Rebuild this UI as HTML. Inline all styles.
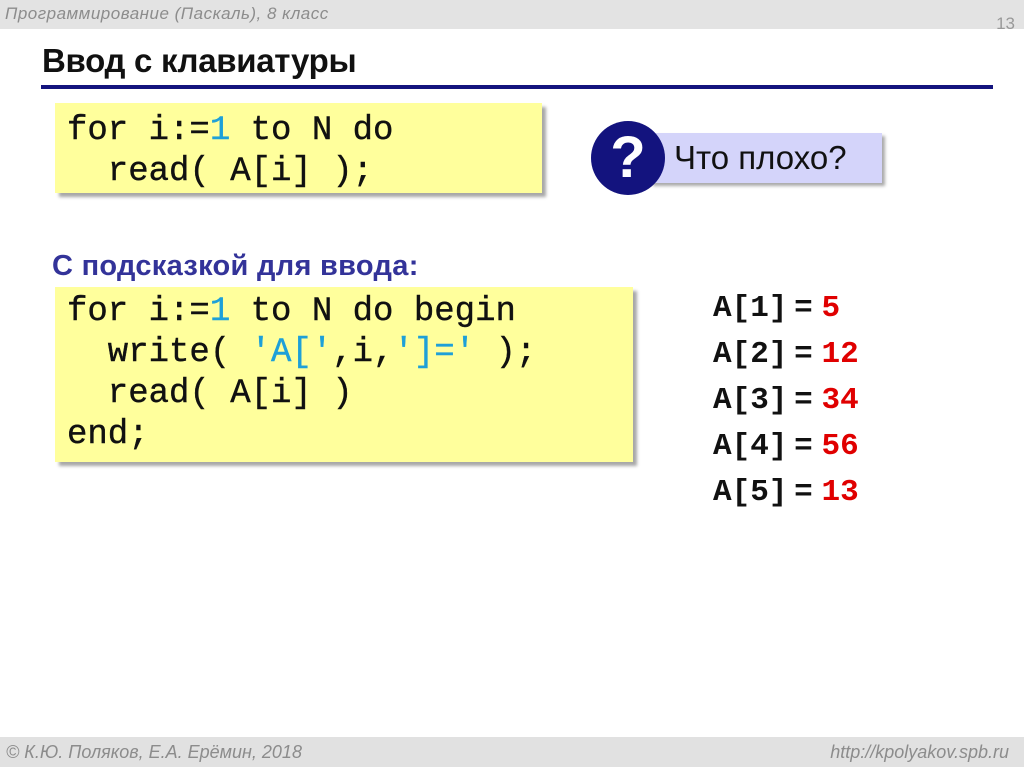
<!DOCTYPE html>
<html><head><meta charset="utf-8"><style>
body{margin:0;width:1024px;height:767px;background:#fff;position:relative;overflow:hidden;font-family:"Liberation Sans",sans-serif}
.hdr{position:absolute;left:0;top:0;width:1024px;height:29px;background:#e3e3e3}
.hdr span{position:absolute;left:5px;top:4px;font-size:17px;letter-spacing:0.5px;font-style:italic;color:#8c8c8c}
.num{position:absolute;right:9px;top:14px;font-size:17px;color:#999}
.ftr{position:absolute;left:0;top:737px;width:1024px;height:30px;background:#e1e1e1;font-style:italic;color:#8c8c8c;font-size:18px}
h1{position:absolute;left:42px;top:42px;margin:0;font-size:33px;font-weight:bold;color:#111;letter-spacing:-0.3px}
.line{position:absolute;left:41px;top:85px;width:952px;height:4px;background:#14147e}
.code{position:absolute;background:#ffff9c;box-shadow:4px 4px 3px #a8a8a8;font-family:"Liberation Mono",monospace;font-size:34px;line-height:41px;color:#111;padding:8px 0 0 12px;box-sizing:border-box;white-space:pre;-webkit-text-stroke:0.4px #111}
.b{color:#1ea0d8;-webkit-text-stroke:0.4px #1ea0d8}
.sub{position:absolute;left:52px;top:250px;font-size:29px;font-weight:bold;color:#333399;letter-spacing:0.3px}
.q{position:absolute;left:650px;top:133px;width:232px;height:50px;background:#d4d4fa;box-shadow:3px 3px 3px #aaa;font-size:33px;color:#111;line-height:50px;padding-left:24px;box-sizing:border-box}
.circ{position:absolute;left:591px;top:121px;width:74px;height:74px;border-radius:50%;background:#13137e;color:#fff;font-weight:bold;font-size:58px;text-align:center;line-height:74px}
.arr{position:absolute;left:713px;top:284px;font-family:"Liberation Mono",monospace;font-weight:bold;font-size:31px;line-height:43px;color:#111}
.arr i{font-style:normal;font-family:"Liberation Sans",sans-serif;font-weight:bold;margin:0 9px 0 7px}
.arr b{color:#e00000}
</style></head><body>
<div class="hdr"><span>Программирование (Паскаль), 8 класс</span></div>
<div class="num">13</div>
<h1>Ввод с клавиатуры</h1>
<div class="line"></div>
<div class="code" style="left:55px;top:103px;width:487px;height:90px">for i:=<span class="b">1</span> to N do
  read( A[i] );</div>
<div class="q">Что плохо?</div>
<div class="circ">?</div>
<div class="sub">С подсказкой для ввода:</div>
<div class="code" style="left:55px;top:287px;width:578px;height:175px;padding-top:5px">for i:=<span class="b">1</span> to N do begin
  write( <span class="b">'A['</span>,i,<span class="b">']='</span> );
  read( A[i] )
end;</div>
<div class="arr">A[1]<i>=</i><b>5</b><br>A[2]<i>=</i><b>12</b><br>A[3]<i>=</i><b>34</b><br>A[4]<i>=</i><b>56</b><br>A[5]<i>=</i><b>13</b></div>
<div class="ftr"><span style="position:absolute;left:6px;top:5px">© К.Ю. Поляков, Е.А. Ерёмин, 2018</span><span style="position:absolute;right:15px;top:5px">http://kpolyakov.spb.ru</span></div>
</body></html>
